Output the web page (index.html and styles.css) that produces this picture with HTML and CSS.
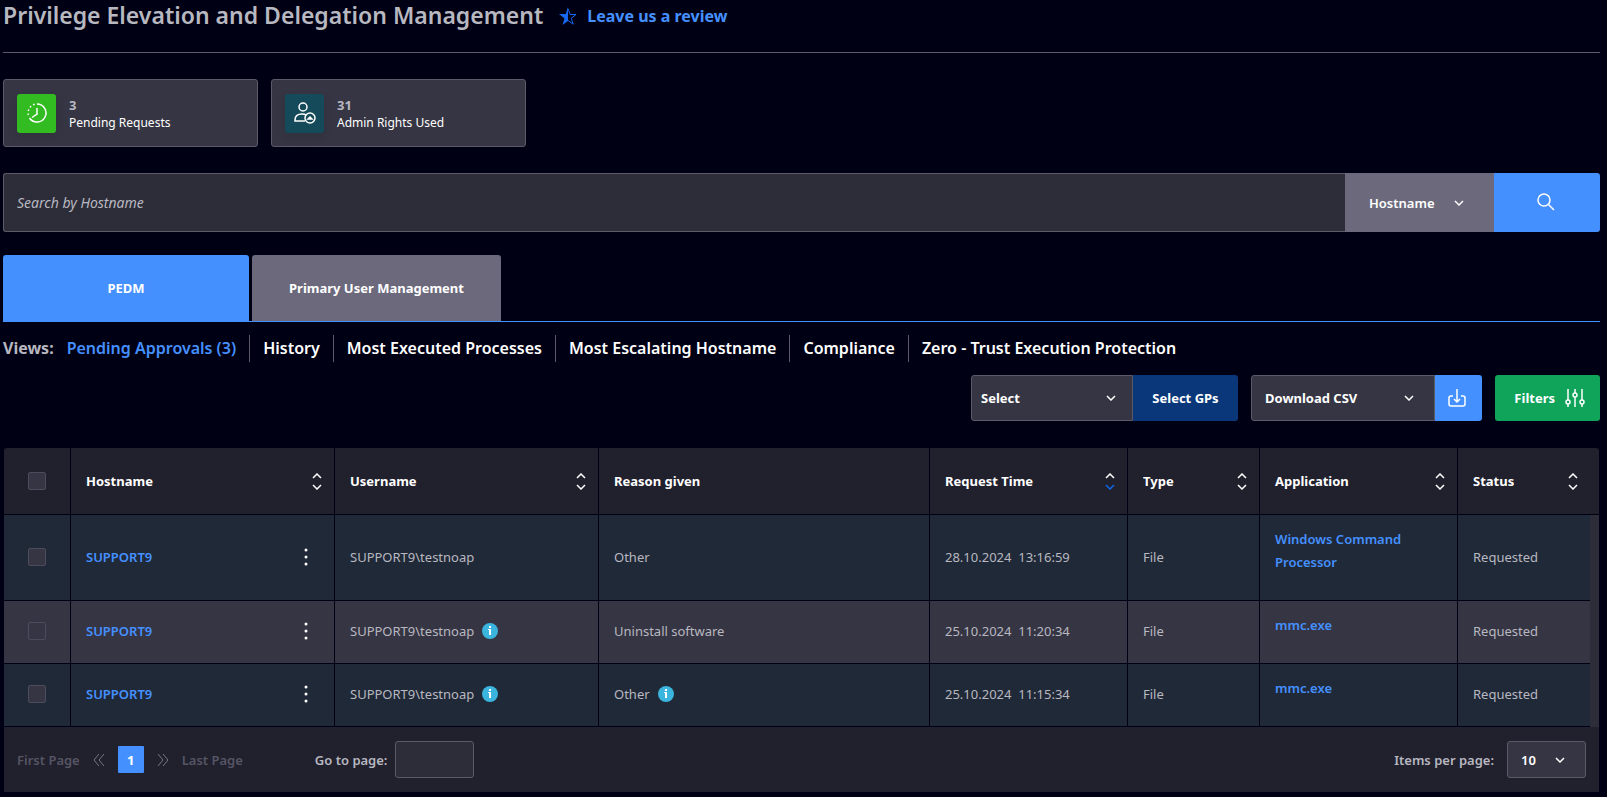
FILE: index.html
```html
<!DOCTYPE html>
<html lang="en">
<head>
    <meta charset="UTF-8">
    <meta name="viewport" content="width=device-width, initial-scale=1.0">
    <title>Privilege Elevation and Delegation Management</title>

    <link rel="stylesheet" href="styles.css">
</head>

<body>
    <!-- Shared icons -->
    <svg class="sprite" aria-hidden="true">
        <symbol id="chevron" viewBox="0 0 10 6"><path d="M1 1l4 4 4-4"/></symbol>
        <symbol id="chevron-up" viewBox="0 0 10 6"><path d="M1 5l4-4 4 4"/></symbol>
        <symbol id="dots" viewBox="0 0 4 18"><circle cx="2" cy="2" r="1.5"/><circle cx="2" cy="9" r="1.5"/><circle cx="2" cy="16" r="1.5"/></symbol>
        <symbol id="info" viewBox="0 0 16 16">
            <circle cx="8" cy="8" r="8" fill="#3bb5dd"/>
            <rect x="7" y="3" width="2" height="2" fill="#fff"/>
            <path d="M6 6h3v6H7V7H6z" fill="#fff"/>
        </symbol>
    </svg>

    <!-- Title -->
    <header class="page-header">
        <h1>Privilege Elevation and Delegation Management</h1>
        <a class="review" href="#">
            <svg class="star" viewBox="0 0 18 18"><path d="M9 0v14l-5.500 4 2-6.500L0 7h6.800z" fill="#1668f0"/><path d="M9 1.500l2.200 6H17l-4.700 3.700 1.900 6L9 13.500" fill="none" stroke="#1668f0"/></svg>
            Leave us a review
        </a>
    </header>

    <!-- Counters -->
    <div class="cards">
        <div class="card">
            <div class="card-icon green">
                <svg viewBox="0 0 22 22"><path d="M11 2a9 9 0 1 1-7.500 14"/><path d="M11 6v6l-5 3.500"/><path d="M2.300 13A9 9 0 0 1 11 2" stroke-dasharray="1.500 2.500"/></svg>
            </div>
            <div>
                <div class="count">3</div>
                <div class="card-label">Pending Requests</div>
            </div>
        </div>
        <div class="card">
            <div class="card-icon teal">
                <svg viewBox="0 0 22 22"><circle cx="9" cy="5" r="4"/><path d="M11 19H1v-1c0-4 3-6 7-6 2 0 3 0 4 1"/><circle cx="16" cy="16" r="5"/><path d="M14 17l2-2 2 2z"/></svg>
            </div>
            <div>
                <div class="count">31</div>
                <div class="card-label">Admin Rights Used</div>
            </div>
        </div>
    </div>

    <!-- Search -->
    <form class="search">
        <input type="text" class="search-input" placeholder="Search by Hostname" aria-label="Search by Hostname">
        <div class="select search-by">
            <select aria-label="Search by"><option>Hostname</option></select>
            <svg class="chevron"><use href="#chevron"/></svg>
        </div>
        <button type="button" class="search-button" aria-label="Search">
            <svg viewBox="0 0 18 18"><circle cx="7" cy="7" r="6"/><path d="M11.500 11.500L17 17"/></svg>
        </button>
    </form>

    <!-- Tabs -->
    <div class="tabs">
        <button type="button" class="tab active">PEDM</button>
        <button type="button" class="tab">Primary User Management</button>
    </div>

    <nav class="views">
        <span class="views-label">Views:</span>
        <a class="current" href="#">Pending Approvals (3)</a>
        <a href="#">History</a>
        <a href="#">Most Executed Processes</a>
        <a href="#">Most Escalating Hostname</a>
        <a href="#">Compliance</a>
        <a href="#">Zero - Trust Execution Protection</a>
    </nav>

    <!-- Actions -->
    <div class="actions">
        <div class="group">
            <div class="select gp-select">
                <select aria-label="Group policy"><option>Select</option></select>
                <svg class="chevron"><use href="#chevron"/></svg>
            </div>
            <button type="button" class="gp-button">Select GPs</button>
        </div>
        <div class="group">
            <div class="select csv-select">
                <select aria-label="Download format"><option>Download CSV</option></select>
                <svg class="chevron"><use href="#chevron"/></svg>
            </div>
            <button type="button" class="csv-button" aria-label="Download">
                <svg viewBox="0 0 18 18"><path d="M5 7H3a2 2 0 0 0-2 2v6a2 2 0 0 0 2 2h12a2 2 0 0 0 2-2V9a2 2 0 0 0-2-2h-2"/><path d="M9 0v13M6 10l3 3 3-3"/></svg>
            </button>
        </div>
        <button type="button" class="filters">
            Filters
            <svg viewBox="0 0 20 20"><path d="M3 1v11M3 16v3M10 1v4M10 9v10M17 1v11M17 16v3"/><circle cx="3" cy="14" r="2"/><circle cx="10" cy="7" r="2"/><circle cx="17" cy="14" r="2"/></svg>
        </button>
    </div>

    <!-- Requests -->
    <div class="table-box">
        <table>
            <colgroup>
                <col class="col-check">
                <col class="col-name">
                <col class="col-name">
                <col class="col-reason">
                <col class="col-time">
                <col class="col-type">
                <col class="col-time">
                <col class="col-status">
                <col class="col-scroll">
            </colgroup>
            <thead>
                <tr>
                    <th class="check"><input type="checkbox" aria-label="Select all"></th>
                    <th><div class="head">Hostname <span class="sort"><svg><use href="#chevron-up"/></svg><svg><use href="#chevron"/></svg></span></div></th>
                    <th><div class="head">Username <span class="sort"><svg><use href="#chevron-up"/></svg><svg><use href="#chevron"/></svg></span></div></th>
                    <th>Reason given</th>
                    <th><div class="head">Request Time <span class="sort desc"><svg><use href="#chevron-up"/></svg><svg><use href="#chevron"/></svg></span></div></th>
                    <th><div class="head">Type <span class="sort"><svg><use href="#chevron-up"/></svg><svg><use href="#chevron"/></svg></span></div></th>
                    <th><div class="head">Application <span class="sort"><svg><use href="#chevron-up"/></svg><svg><use href="#chevron"/></svg></span></div></th>
                    <th colspan="2"><div class="head last">Status <span class="sort"><svg><use href="#chevron-up"/></svg><svg><use href="#chevron"/></svg></span></div></th>
                </tr>
            </thead>
            <tbody>
                <tr class="tall">
                    <td class="check"><input type="checkbox" aria-label="Select row 1"></td>
                    <td><div class="host"><a href="#">SUPPORT9</a><button type="button" aria-label="More"><svg><use href="#dots"/></svg></button></div></td>
                    <td>SUPPORT9\testnoap</td>
                    <td>Other</td>
                    <td>28.10.2024&nbsp; 13:16:59</td>
                    <td>File</td>
                    <td class="app"><a href="#">Windows Command Processor</a></td>
                    <td>Requested</td>
                    <td class="scroll" rowspan="3"></td>
                </tr>
                <tr>
                    <td class="check"><input type="checkbox" aria-label="Select row 2"></td>
                    <td><div class="host"><a href="#">SUPPORT9</a><button type="button" aria-label="More"><svg><use href="#dots"/></svg></button></div></td>
                    <td><div class="with-info">SUPPORT9\testnoap <svg><use href="#info"/></svg></div></td>
                    <td>Uninstall software</td>
                    <td>25.10.2024&nbsp; 11:20:34</td>
                    <td>File</td>
                    <td class="app"><a href="#">mmc.exe</a></td>
                    <td>Requested</td>
                </tr>
                <tr>
                    <td class="check"><input type="checkbox" aria-label="Select row 3"></td>
                    <td><div class="host"><a href="#">SUPPORT9</a><button type="button" aria-label="More"><svg><use href="#dots"/></svg></button></div></td>
                    <td><div class="with-info">SUPPORT9\testnoap <svg><use href="#info"/></svg></div></td>
                    <td><div class="with-info wide">Other <svg><use href="#info"/></svg></div></td>
                    <td>25.10.2024&nbsp; 11:15:34</td>
                    <td>File</td>
                    <td class="app"><a href="#">mmc.exe</a></td>
                    <td>Requested</td>
                </tr>
            </tbody>
        </table>

        <div class="pager">
            <button type="button" class="page-end">First Page</button>
            <button type="button" class="page-step" aria-label="Previous"><svg viewBox="0 0 12 14"><path d="M6 1L1 7l5 6M11 1L6 7l5 6"/></svg></button>
            <button type="button" class="page-number">1</button>
            <button type="button" class="page-step" aria-label="Next"><svg viewBox="0 0 12 14"><path d="M1 1l5 6-5 6M6 1l5 6-5 6"/></svg></button>
            <button type="button" class="page-end">Last Page</button>
            <label class="goto">Go to page: <input type="text"></label>
            <label class="per-page" for="per-page">Items per page:</label>
            <div class="select page-size">
                <select id="per-page"><option>10</option></select>
                <svg class="chevron"><use href="#chevron"/></svg>
            </div>
        </div>
    </div>
</body>
</html>
```
FILE: styles.css
```css
* {
    box-sizing: border-box;
}

body {
    font-family: "Noto Sans", sans-serif;
    font-size: 13px;
    line-height: 18px;
    margin: 0;
    padding: 0 7px 4px 3px;
    background-color: #000014;
    color: #b8b8c0;
}

a {
    color: #4590ff;
    text-decoration: none;
}

button, input, select {
    font: inherit;
    color: inherit;
    margin: 0;
    padding: 0;
    border: 0;
    background: none;
}

svg {
    display: block;
    flex: none;
    fill: none;
    stroke: currentColor;
}

.sprite {
    position: absolute;
    width: 0;
    height: 0;
}

/* Title */
.page-header {
    display: flex;
    align-items: center;
    gap: 16px;
    height: 53px;
    padding-bottom: 21px;
    border-bottom: 1px solid #5c5a69;
}

h1 {
    margin: 0;
    font-size: 23px;
    line-height: 31px;
    font-weight: 600;
}

.review {
    display: flex;
    align-items: center;
    gap: 10px;
    font-size: 16px;
    font-weight: 700;
}

.star {
    width: 18px;
    height: 18px;
    stroke: none;
}

/* Counters */
.cards {
    display: flex;
    gap: 13px;
    margin: 26px 0;
}

.card {
    display: flex;
    align-items: center;
    gap: 13px;
    width: 255px;
    height: 68px;
    padding: 0 13px;
    background-color: #363543;
    border: 1px solid #5c5a69;
    border-radius: 3px;
}

.card-icon {
    display: flex;
    align-items: center;
    justify-content: center;
    width: 39px;
    height: 39px;
    border-radius: 3px;
    color: #fff;
    box-shadow: 0 4px 8px rgba(0, 0, 0, 0.1);
}

.card-icon svg {
    width: 22px;
    height: 22px;
    stroke-width: 1.500;
}

.green {
    background-color: #33bb22;
}

.teal {
    background-color: #144a5a;
}

.count {
    padding-top: 2px;
    font-weight: 700;
}

.card-label {
    font-size: 12px;
    color: #fff;
}

/* Selects */
.select {
    position: relative;
    display: flex;
    color: #fff;
    background-color: #363543;
    border: 1px solid #5c5a69;
}

.select select {
    width: 100%;
    appearance: none;
    font-weight: 600;
}

.chevron {
    position: absolute;
    top: 50%;
    margin-top: -3px;
    width: 10px;
    height: 6px;
    stroke-width: 1.500;
    pointer-events: none;
}

/* Search */
.search {
    display: flex;
    height: 59px;
    margin-bottom: 23px;
}

.search-input {
    flex: 1;
    padding: 0 13px;
    font-size: 14px;
    background-color: #2d2c39;
    border: 1px solid #5c5a69;
    border-right: 0;
    border-radius: 3px 0 0 3px;
}

.search-input::placeholder {
    color: #b8b8c0;
    font-style: italic;
    opacity: 1;
}

.search-by {
    width: 149px;
    background-color: #6b697b;
    border: 0;
}

.search-by select {
    padding-left: 24px;
}

.search-by .chevron {
    right: 30px;
}

.search-button {
    display: flex;
    align-items: center;
    justify-content: center;
    width: 106px;
    padding: 0 2px 2px 0;
    color: #fff;
    background-color: #4590ff;
    border-radius: 0 3px 3px 0;
}

.search-button svg {
    width: 18px;
    height: 18px;
    stroke-width: 1.500;
}

/* Tabs */
.tabs {
    display: flex;
    gap: 3px;
    border-bottom: 1px solid #4590ff;
}

.tab {
    width: 249px;
    height: 66px;
    color: #fff;
    font-weight: 700;
    background-color: #6b697b;
    border-radius: 3px 3px 0 0;
}

.tab.active {
    width: 246px;
    background-color: #4590ff;
}

.views {
    display: flex;
    align-items: center;
    margin: 13px 0;
    font-size: 16px;
    line-height: 27px;
    font-weight: 600;
}

.views-label {
    font-weight: 700;
}

.views a {
    padding: 0 13px;
    color: #fff;
    border-left: 1px solid #5c5a69;
}

.views .current {
    color: #4590ff;
    border: 0;
}

/* Actions */
.actions {
    display: flex;
    justify-content: flex-end;
    gap: 13px;
    height: 46px;
    margin-bottom: 27px;
    color: #fff;
    font-weight: 700;
}

.group {
    display: flex;
}

.group .select {
    border-radius: 3px 0 0 3px;
}

.group select {
    font-weight: 700;
}

.gp-select {
    width: 162px;
}

.gp-select select {
    padding-left: 9px;
}

.gp-select .chevron {
    right: 16px;
}

.gp-button {
    width: 105px;
    background-color: #0a377a;
    border-radius: 0 3px 3px 0;
}

.csv-select {
    width: 184px;
}

.csv-select select {
    padding-left: 13px;
}

.csv-select .chevron {
    right: 20px;
}

.csv-button {
    display: flex;
    align-items: center;
    justify-content: center;
    width: 47px;
    padding-right: 3px;
    background-color: #4590ff;
    border-radius: 0 3px 3px 0;
}

.csv-button svg {
    width: 18px;
    height: 18px;
    stroke-width: 1.500;
}

.filters {
    display: flex;
    align-items: center;
    justify-content: flex-end;
    gap: 10px;
    width: 105px;
    padding-right: 15px;
    background-color: #10a35a;
    border-radius: 3px;
}

.filters svg {
    width: 20px;
    height: 20px;
    stroke-width: 1.500;
}

/* Requests */
.table-box {
    margin: 0 1px;
    background-color: #21202d;
    border-radius: 3px 3px 0 0;
}

table {
    width: 100%;
    table-layout: fixed;
    border-collapse: separate;
    border-spacing: 0;
}

.col-check { width: 67px; }
.col-name { width: 264px; }
.col-time { width: 198px; }
.col-type { width: 132px; }
.col-status { width: 132px; }
.col-scroll { width: 9px; }

th, td {
    height: 63px;
    padding: 0 15px;
    text-align: left;
    border-right: 1px solid #000014;
    border-bottom: 1px solid #000014;
}

th {
    height: 67px;
    color: #fff;
    font-weight: 700;
}

th:last-child {
    border-right: 0;
}

td {
    padding-bottom: 2px;
    background-color: #202937;
}

tr:nth-child(even) td {
    background-color: #363543;
}

td:nth-child(8) {
    border-right: 0;
}

.tall td {
    height: 86px;
}

.tall .scroll {
    padding: 0;
    background-color: #2d2c39;
    border: 0;
}

.check {
    padding-left: 0;
    padding-right: 0;
}

.check input {
    display: block;
    appearance: none;
    width: 18px;
    height: 18px;
    margin: 0 auto;
    background-color: #363543;
    border: 1px solid #4e4c5c;
    border-radius: 2px;
}

.head, .host {
    display: flex;
    align-items: center;
    justify-content: space-between;
}

.sort {
    display: flex;
    flex-direction: column;
    gap: 5px;
    margin-right: -3px;
}

.last .sort {
    margin-right: 6px;
}

.sort svg {
    width: 10px;
    height: 6px;
    stroke-width: 1.500;
}

.desc svg:last-child {
    color: #0f68e8;
}

.host a {
    font-weight: 600;
}

.host button {
    padding: 0 11px;
    color: #fff;
}

.host svg {
    width: 4px;
    height: 18px;
    fill: #fff;
    stroke: none;
}

.with-info {
    display: flex;
    align-items: center;
    gap: 8px;
}

.with-info svg {
    width: 16px;
    height: 16px;
    stroke: none;
}

td.app {
    padding-top: 13px;
    line-height: 23px;
    font-weight: 600;
    vertical-align: top;
}

/* Pager */
.pager {
    display: flex;
    align-items: center;
    height: 65px;
    padding: 0 13px;
    font-weight: 600;
}

.page-end {
    color: #555564;
    font-weight: 600;
}

.page-step {
    padding: 0 13px;
    color: #777685;
}

.page-step svg {
    width: 12px;
    height: 14px;
}

.page-number {
    width: 26px;
    height: 27px;
    color: #fff;
    font-weight: 700;
    background-color: #4590ff;
    border-radius: 1px;
}

.goto {
    display: flex;
    align-items: center;
    gap: 8px;
    margin: 0 auto 0 72px;
}

.goto input {
    width: 79px;
    height: 37px;
    padding: 0 8px;
    background-color: #2d2c39;
    border: 1px solid #5c5a69;
    border-radius: 3px;
}

.per-page {
    margin-right: 13px;
}

.page-size {
    width: 79px;
    height: 37px;
    border-radius: 3px;
}

.page-size select {
    padding-left: 13px;
}

.page-size .chevron {
    right: 20px;
}
```
